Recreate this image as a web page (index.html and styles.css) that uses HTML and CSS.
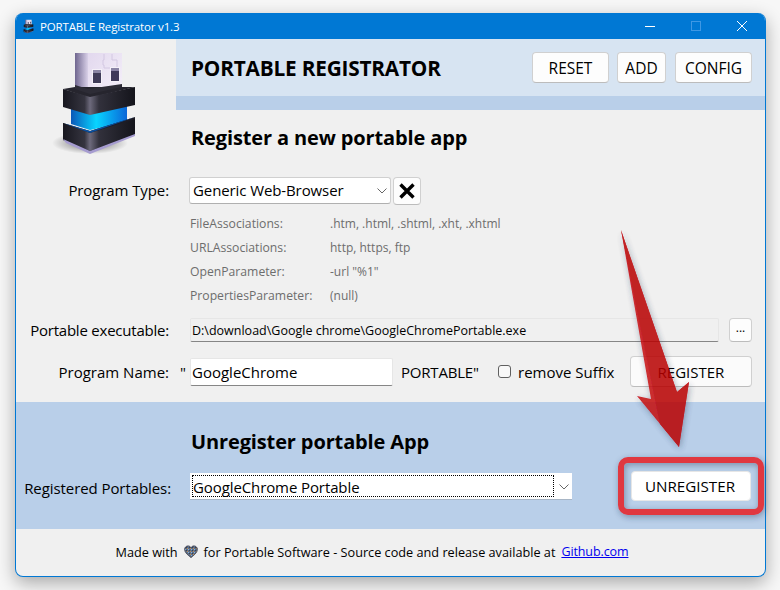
FILE: index.html
```html
<!DOCTYPE html>
<html lang="en">
<head>
<meta charset="utf-8">
<title>PORTABLE Registrator v1.3</title>
<link rel="stylesheet" href="styles.css">
</head>
<body>
<svg class="defs" width="0" height="0" aria-hidden="true">
  <defs>
    <linearGradient id="plugSide" x1="0" x2="1" y1="0" y2="0"><stop offset="0" stop-color="#6f668f"/><stop offset="1" stop-color="#d9d0e8"/></linearGradient>
    <linearGradient id="plugFace" x1="0" x2="1" y1="0" y2="1"><stop offset="0" stop-color="#e2d8ee"/><stop offset="1" stop-color="#f6f1fa"/></linearGradient>
    <linearGradient id="blockL" x1="0" x2="1" y1="0" y2="0"><stop offset="0" stop-color="#17171f"/><stop offset=".8" stop-color="#35343f"/><stop offset="1" stop-color="#6d6a7c"/></linearGradient>
    <linearGradient id="blockR" x1="0" x2="1" y1="0" y2="0"><stop offset="0" stop-color="#6d6a7c"/><stop offset=".2" stop-color="#32313c"/><stop offset="1" stop-color="#14141b"/></linearGradient>
    <linearGradient id="blue" x1="0" x2="1" y1="0" y2="0"><stop offset="0" stop-color="#0a58b8"/><stop offset=".45" stop-color="#08d4ff"/><stop offset="1" stop-color="#0a66d8"/></linearGradient>
    <radialGradient id="shade"><stop offset="0" stop-color="#000" stop-opacity=".55"/><stop offset="1" stop-color="#000" stop-opacity="0"/></radialGradient>
    <symbol id="usb" viewBox="50 48 90 110">
      <ellipse cx="90" cy="143" rx="38" ry="11" fill="url(#shade)"/>
      <polygon points="75,53 88,53 88,98 75,94" fill="url(#plugSide)"/>
      <polygon points="88,53 122,53 122,92 88,98" fill="url(#plugFace)"/>
      <path d="M104 54v6h-1v5h1v3h13v-8h-5v-6" fill="none" stroke="#d3c8e2"/>
      <rect x="92" y="69" width="10" height="15" fill="#f4f0f8"/>
      <rect x="93" y="70" width="8" height="13" fill="#3f3a58"/>
      <rect x="93" y="70" width="8" height="3" fill="#8a84a4"/>
      <rect x="110" y="67" width="10" height="15" fill="#f4f0f8"/>
      <rect x="111" y="68" width="8" height="13" fill="#3f3a58"/>
      <rect x="111" y="68" width="8" height="3" fill="#8a84a4"/>
      <polygon points="71,108 90,113 127,105 127,122 90,130 71,124" fill="url(#blue)"/>
      <polygon points="63,123 90,131 135,117 135,135 90,153 63,140" fill="#1d1c26"/>
      <polygon points="63,123 90,133 90,151 63,139" fill="url(#blockL)"/>
      <polygon points="90,133 135,119 135,134 90,151" fill="url(#blockR)"/>
      <polygon points="63,123 90,131 135,117 90,133" fill="#0a4f9e"/>
      <polygon points="63,139 90,151 135,134 135,136 90,154 66,143" fill="#a69cd0"/>
      <polygon points="63,89 75,87 122,87 135,87 90,98" fill="#26252e"/>
      <polygon points="63,89 90,97 90,115 63,107" fill="url(#blockL)"/>
      <polygon points="90,97 135,87 135,105 90,115" fill="url(#blockR)"/>
      <polygon points="75,85 88,89 122,84 122,87 90,94 75,89" fill="#2d2c36"/>
    </symbol>
    <pattern id="dither" width="3" height="3" patternUnits="userSpaceOnUse">
      <rect width="3" height="3" fill="#5d6f86"/><rect width="1" height="1" fill="#c08a50"/><rect x="1" y="1" width="1" height="1" fill="#8ab0dc"/><rect x="2" y="2" width="1" height="1" fill="#3a3f52"/>
    </pattern>
  </defs>
</svg>
<main class="window">
  <header class="titlebar">
    <svg class="title-icon" width="12" height="15" aria-hidden="true"><use href="#usb"/></svg>
    <span class="title-text">PORTABLE Registrator v1.3</span>
    <div class="controls">
      <span class="control"><svg width="12" height="12" aria-hidden="true"><path d="M1 6.500h10" stroke="#fff"/></svg></span>
      <span class="control"><svg width="12" height="12" aria-hidden="true"><rect x="1.500" y="1.500" width="9" height="9" fill="none" stroke="#3f98e4"/></svg></span>
      <span class="control"><svg width="12" height="12" aria-hidden="true"><path d="M1 1l10 10M11 1L1 11" stroke="#fff" fill="none"/></svg></span>
    </div>
  </header>

  <section class="register">
    <div class="hero">
      <svg class="logo" width="90" height="110" aria-hidden="true"><use href="#usb"/></svg>
      <div class="hero-main">
        <div class="app-head">
          <h1 class="app-name">PORTABLE REGISTRATOR</h1>
          <div class="head-actions">
            <button class="btn btn-reset">RESET</button>
            <button class="btn btn-add">ADD</button>
            <button class="btn btn-config">CONFIG</button>
          </div>
        </div>
        <div class="strip"></div>
        <h2 class="section-title">Register a new portable app</h2>
      </div>
    </div>

    <div class="row row-type">
      <label class="label">Program Type:</label>
      <div class="combo combo-type">
        <select class="select"><option>Generic Web-Browser</option></select>
        <svg class="chevron" width="10" height="6" aria-hidden="true"><path d="M.5.5L5 5 9.500.5" fill="none" stroke="#666"/></svg>
      </div>
      <button class="btn btn-x" aria-label="Clear"><svg width="18" height="18" aria-hidden="true"><path d="M2.500 2.500l13 13M15.500 2.500l-13 13" stroke="#000" stroke-width="3.4" fill="none"/></svg></button>
    </div>

    <dl class="info">
      <dt>FileAssociations:</dt><dd>.htm, .html, .shtml, .xht, .xhtml</dd>
      <dt>URLAssociations:</dt><dd>http, https, ftp</dd>
      <dt>OpenParameter:</dt><dd>-url "%1"</dd>
      <dt>PropertiesParameter:</dt><dd>(null)</dd>
    </dl>

    <div class="row row-exe">
      <label class="label">Portable executable:</label>
      <input class="input input-exe" readonly value="D:\download\Google chrome\GoogleChromePortable.exe">
      <button class="btn btn-dots">...</button>
    </div>

    <div class="row row-name">
      <label class="label">Program Name:</label>
      <span class="quote">"</span>
      <input class="input input-name" value="GoogleChrome">
      <span class="suffix">PORTABLE"</span>
      <span class="check-wrap"><span class="check"></span><span class="check-label">remove Suffix</span></span>
      <button class="btn btn-register">REGISTER</button>
    </div>
  </section>

  <section class="unregister">
    <h2 class="section-title section-title-un">Unregister portable App</h2>
    <div class="row row-un">
      <label class="label label-un">Registered Portables:</label>
      <div class="combo combo-un">
        <select class="select select-un"><option>GoogleChrome Portable</option></select>
        <svg class="chevron" width="10" height="6" aria-hidden="true"><path d="M.5.5L5 5 9.500.5" fill="none" stroke="#666"/></svg>
      </div>
      <button class="btn btn-unregister">UNREGISTER</button>
    </div>
  </section>

  <footer class="footer">
    <span>Made with</span>
    <svg class="heart" width="14" height="13" aria-hidden="true"><path d="M7 12.500C3 9.500.7 7.200.7 4.300.7 2.300 2.200 1 4 1c1.300 0 2.400.6 3 1.700C7.600 1.600 8.700 1 10 1c1.800 0 3.300 1.300 3.300 3.300 0 2.900-2.300 5.200-6.300 8.200z" fill="url(#dither)" stroke="#3c3f4e"/></svg>
    <span>for Portable Software - Source code and release available at</span>
    <a class="link" href="#">Github.com</a>
  </footer>
</main>

<svg class="annotation" width="780" height="590" viewBox="0 0 780 590" aria-hidden="true">
  <defs>
    <filter id="soft" x="-30%" y="-30%" width="160%" height="160%"><feDropShadow dx="1" dy="2" stdDeviation="3" flood-color="#24364f" flood-opacity=".45"/></filter>
  </defs>
  <rect class="mark" x="621" y="460" width="140" height="52" rx="7" filter="url(#soft)"/>
  <g filter="url(#soft)" opacity=".85">
    <polygon points="621,230 651,399 637,396 679,447 689,382 677,392" fill="#c4070f"/>
    <polygon points="621,230 677,392 689,382 679,447 660,424" fill="#b80102"/>
  </g>
</svg>
</body>
</html>
```
FILE: styles.css
```css
* { box-sizing: border-box; }
html, body { margin: 0; height: 100%; }
body {
  width: 780px;
  height: 590px;
  overflow: hidden;
  padding: 13px 14px 13px 15px;
  background: #f7f7f7;
  font-family: "Open Sans", "Noto Sans", "Liberation Sans", sans-serif;
  font-size: 15px;
  color: #000;
  position: relative;
}
.defs { position: absolute; }
.window {
  height: 564px;
  display: flex;
  flex-direction: column;
  background: #f0f0f0;
  border: 1px solid #0078d4;
  border-top: 0;
  border-radius: 8px;
  overflow: hidden;
  box-shadow: 0 6px 18px rgba(0,0,0,.32);
}
.titlebar {
  height: 26px;
  flex: none;
  margin: 0 -1px;
  background: #0078d4;
  color: #fff;
  display: flex;
  align-items: center;
  padding: 0 1px 0 7px;
}
.title-icon { margin-right: 6px; }
.title-text { font-size: 11.5px; letter-spacing: -.16px; }
.controls { margin-left: auto; display: flex; }
.control { width: 46px; height: 26px; display: flex; align-items: center; justify-content: center; }

.register { flex: none; height: 363px; }
.hero { display: flex; height: 120px; }
.logo { flex: none; margin: 9px 0 0 34px; }
.hero-main { margin-left: 36px; flex: 1; min-width: 0; }
.app-head {
  height: 57px;
  background: #d7e4f2;
  display: flex;
  align-items: center;
  justify-content: space-between;
  padding: 0 13px 0 15px;
}
.app-name { margin: 0; font-size: 20.8px; font-weight: 700; letter-spacing: -.2px; }
.head-actions { display: flex; gap: 8px; }
.strip { height: 14px; background: #b9cfe9; }
.section-title { margin: 15px 0 0 15px; font-size: 20px; line-height: 26px; font-weight: 700; letter-spacing: -.13px; }
.section-title-un { margin: 27px 0 0 175px; }

.btn {
  font: inherit;
  font-size: 15.5px;
  color: #000;
  background: #fdfdfd;
  border: 1px solid #d0d0d0;
  border-bottom-color: #bcbcbc;
  border-radius: 4px;
  padding: 0;
  height: 31px;
}
.btn-reset { width: 77px; }
.btn-add { width: 49px; margin-right: 1px; }
.btn-config { width: 77px; }

.row { display: flex; align-items: center; }
.label { width: 153px; flex: none; text-align: right; font-size: 15px; letter-spacing: -.1px; }
.row-type { margin-top: 18px; height: 27px; }
.row-type .label { padding-bottom: 2px; }
.combo { position: relative; flex: none; display: block; }
.combo-type { width: 202px; height: 27px; margin-left: 20px; }
.select {
  appearance: none;
  width: 100%;
  height: 100%;
  font: inherit;
  font-size: 15px;
  letter-spacing: -.1px;
  color: #000;
  background: #fff;
  border: 1px solid #d0d0d0;
  border-bottom-color: #b0b0b0;
  border-radius: 3px;
  padding: 0 0 2px 3px;
  display: block;
}
.chevron { position: absolute; right: 4px; top: 11px; pointer-events: none; }
.btn-x { width: 28px; height: 28px; margin-left: 2px; display: flex; align-items: center; justify-content: center; }

.info {
  margin: 7px 0 0 174px;
  display: grid;
  grid-template-columns: 140px 1fr;
  grid-auto-rows: 24px;
  align-items: center;
  font-size: 12px;
  color: #6d6d6d;
}
.info dt, .info dd { margin: 0; }
.info dt { font-size: 12.2px; }

.row-exe { margin-top: 11px; height: 24px; }
.row-exe .label { letter-spacing: -.22px; }
.input {
  font: inherit;
  color: #000;
  border: 1px solid #e6e6e6;
  border-bottom: 1px solid #868686;
  border-radius: 2px;
  outline: 0;
  padding: 0 1px;
}
.input-exe { width: 529px; height: 24px; margin-left: 21px; background: #f0f0f0; font-size: 12.5px; }
.btn-dots { width: 23px; height: 24px; margin-left: 10px; font-size: 12px; padding-bottom: 6px; }

.row-name { margin-top: 14px; height: 31px; }
.row-name .label { letter-spacing: 0; }
.quote { width: 21px; padding-left: 11px; flex: none; font-size: 15px; }
.input-name { width: 203px; height: 28px; background: #fff; font-size: 15px; }
.suffix { margin-left: 8px; width: 97px; flex: none; font-size: 15px; letter-spacing: -.2px; }
.check-wrap { display: flex; align-items: center; width: 132px; flex: none; }
.check { width: 13px; height: 13px; border: 1px solid #606060; border-radius: 3px; background: #f8f8f8; margin-right: 7px; flex: none; }
.check-label { font-size: 15px; }
.btn-register { width: 122px; background: #fbfbfb; font-size: 15px; }

.unregister { flex: none; height: 127px; background: #b9cfe9; }
.row-un { margin-top: 16px; height: 30px; }
.label-un { width: 155px; padding-top: 4px; text-align: right; font-size: 15px; letter-spacing: -.08px; }
.combo-un { width: 382px; height: 27px; margin-left: 19px; align-self: flex-start; margin-top: 2px; }
.combo-un::before {
  content: "";
  position: absolute;
  left: 2px;
  top: 2px;
  width: 360px;
  bottom: 3px;
  border: 1px dotted #000;
  pointer-events: none;
}
.combo-un .chevron { right: 3px; }
.select-un { border: 0; border-bottom: 1px solid #a8b6c6; border-radius: 0; padding: 2px 0 0 3px; }
.btn-unregister { width: 120px; height: 30px; margin-left: 59px; border-color: #e8e8e8; background: #fff; font-size: 15.2px; padding-right: 2px; }

.footer {
  flex: 1;
  display: flex;
  align-items: center;
  justify-content: center;
  gap: 6px;
  font-size: 12.7px;
  padding: 0 37px 2px 0;
}
.link { color: #0000ee; font-size: 12.5px; letter-spacing: -.1px; }
.heart { flex: none; }

.annotation { position: absolute; left: 0; top: 0; pointer-events: none; }
.mark { fill: none; stroke: #e0373f; stroke-width: 6; }
```
